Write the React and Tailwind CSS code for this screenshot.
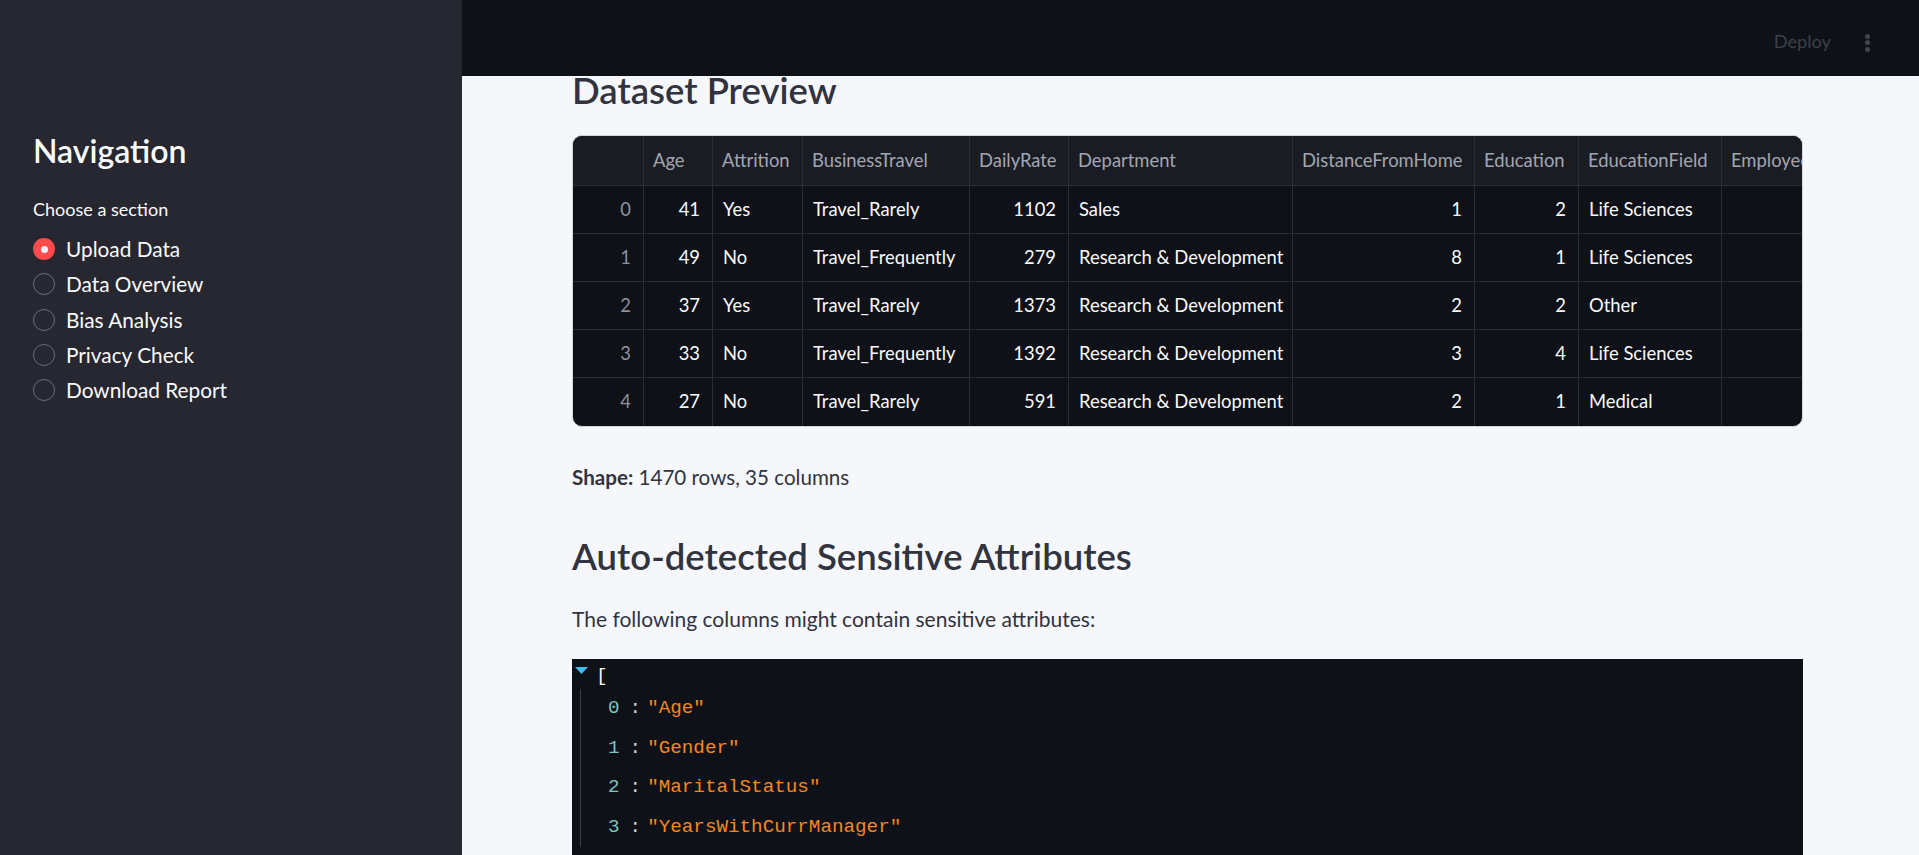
import React from "react";

const navItems = ["Upload Data", "Data Overview", "Bias Analysis", "Privacy Check", "Download Report"];

const cols = [
  { key: "idx", label: "", w: 71, align: "right", idx: true },
  { key: "Age", label: "Age", w: 69, align: "right" },
  { key: "Attrition", label: "Attrition", w: 90, align: "left" },
  { key: "BusinessTravel", label: "BusinessTravel", w: 167, align: "left" },
  { key: "DailyRate", label: "DailyRate", w: 99, align: "right" },
  { key: "Department", label: "Department", w: 224, align: "left" },
  { key: "DistanceFromHome", label: "DistanceFromHome", w: 182, align: "right" },
  { key: "Education", label: "Education", w: 104, align: "right" },
  { key: "EducationField", label: "EducationField", w: 143, align: "left" },
  { key: "EmployeeCount", label: "EmployeeCount", w: 150, align: "right" },
];

const rows = [
  ["0", "41", "Yes", "Travel_Rarely", "1102", "Sales", "1", "2", "Life Sciences", "1"],
  ["1", "49", "No", "Travel_Frequently", "279", "Research & Development", "8", "1", "Life Sciences", "1"],
  ["2", "37", "Yes", "Travel_Rarely", "1373", "Research & Development", "2", "2", "Other", "1"],
  ["3", "33", "No", "Travel_Frequently", "1392", "Research & Development", "3", "4", "Life Sciences", "1"],
  ["4", "27", "No", "Travel_Rarely", "591", "Research & Development", "2", "1", "Medical", "1"],
];

const jsonItems = ["Age", "Gender", "MaritalStatus", "YearsWithCurrManager"];

function Radio({ selected }) {
  if (selected) {
    return (
      <span className="flex h-[22px] w-[22px] shrink-0 items-center justify-center rounded-full bg-[#ff4b4b]">
        <span className="h-[7px] w-[7px] rounded-full bg-[#f0f2f6]" />
      </span>
    );
  }
  return <span className="h-[22px] w-[22px] shrink-0 rounded-full border-[1.5px] border-[#6b6e77]" />;
}

function DataTable() {
  return (
    <div className="w-[1231px] overflow-hidden rounded-[10px] border border-[#d3d5da] bg-[#0e1117]">
      <div className="flex h-[50px] border-b border-[#2b2d36] bg-[#1a1c24]">
        {cols.map((c) => (
          <div
            key={c.key}
            style={{ width: c.w }}
            className="flex shrink-0 items-center overflow-hidden whitespace-nowrap border-r border-[#2b2d36] pl-[9px] pr-[11px] text-[18.4px] text-[#a3a6b0]"
          >
            {c.label}
          </div>
        ))}
      </div>
      {rows.map((r, ri) => (
        <div
          key={ri}
          className={`flex h-[48px] ${ri < rows.length - 1 ? "border-b border-[#2b2d36]" : ""}`}
        >
          {cols.map((c, ci) => (
            <div
              key={c.key}
              style={{ width: c.w }}
              className={`flex shrink-0 items-center overflow-hidden whitespace-nowrap border-r border-[#2b2d36] pl-[10px] pr-[12px] text-[18.4px] ${
                c.align === "right" ? "justify-end" : "justify-start"
              } ${c.idx ? "text-[#8e919a]" : "text-[#fafafa]"}`}
            >
              {c.key === "EmployeeCount" ? "" : r[ci]}
            </div>
          ))}
        </div>
      ))}
    </div>
  );
}

function JsonView() {
  return (
    <div className="h-[260px] w-[1231px] bg-[#0e1117] pt-[4px] font-['Liberation_Mono','DejaVu_Sans_Mono',monospace] text-[19.25px]">
      <div className="flex h-[26px] items-center">
        <svg width="13" height="7" viewBox="0 0 13 7" className="ml-[3px] mt-[-12px]">
          <polygon points="0,0 13,0 6.5,7" fill="#3fbde6" />
        </svg>
        <span className="ml-[8px] text-[#f5f5f5]">[</span>
      </div>
      <div className="ml-[8px] border-l border-[#3a3c44]">
        {jsonItems.map((it, i) => (
          <div key={it} className="flex h-[39.5px] items-center pl-[27px]">
            <span className="text-[#7fc4bd]">{i}</span>
            <span className="ml-[10px] text-[#d0d2d6]">:</span>
            <span className="ml-[6px] text-[#f5871f]">"{it}"</span>
          </div>
        ))}
      </div>
      <div className="mt-[10px] flex h-[26px] items-center pl-[23px] text-[#f5f5f5]">]</div>
    </div>
  );
}

export default function App() {
  return (
    <div className="flex h-[855px] w-[1919px] overflow-hidden font-['Lato','Noto_Sans',sans-serif]">
      <aside className="w-[462px] shrink-0 bg-[#262730] pl-[33px] pt-[131px] text-[#fafafa]">
        <h2 className="text-[32px] font-semibold leading-[40px]">Navigation</h2>
        <div className="mt-[26px] text-[18px] leading-[24px]">Choose a section</div>
        <div className="mt-[10.5px] flex flex-col">
          {navItems.map((it, i) => (
            <div key={it} className="flex h-[35.3px] items-center">
              <Radio selected={i === 0} />
              <span className="ml-[11px] text-[20.8px] leading-[26px]">{it}</span>
            </div>
          ))}
        </div>
      </aside>
      <main className="flex min-w-0 flex-1 flex-col overflow-hidden bg-[#f6f7fa]">
        <header className="flex h-[76px] shrink-0 items-start justify-end bg-[#0e1117] pr-[49px]">
          <span className="mt-[29px] text-[18.2px] leading-[24px] text-[#3d4047]">Deploy</span>
          <div className="ml-[34px] mt-[33.5px] flex flex-col gap-[1.5px]">
            <span className="h-[5px] w-[5px] rounded-full bg-[#43464e]" />
            <span className="h-[5px] w-[5px] rounded-full bg-[#43464e]" />
            <span className="h-[5px] w-[5px] rounded-full bg-[#43464e]" />
          </div>
        </header>
        <div className="pl-[110px] text-[#31333f]">
          <h3 className="text-[36.5px] font-semibold leading-[28px]">Dataset Preview</h3>
          <div className="mt-[31px]">
            <DataTable />
          </div>
          <p className="mt-[35px] text-[20.6px] leading-[30px]">
            <span className="font-bold">Shape:</span> 1470 rows, 35 columns
          </p>
          <h3 className="mt-[42px] text-[36.5px] font-semibold leading-[44px]">Auto-detected Sensitive Attributes</h3>
          <p className="mt-[25.5px] text-[21px] leading-[30px]">The following columns might contain sensitive attributes:</p>
          <div className="mt-[25.5px]">
            <JsonView />
          </div>
        </div>
      </main>
    </div>
  );
}
